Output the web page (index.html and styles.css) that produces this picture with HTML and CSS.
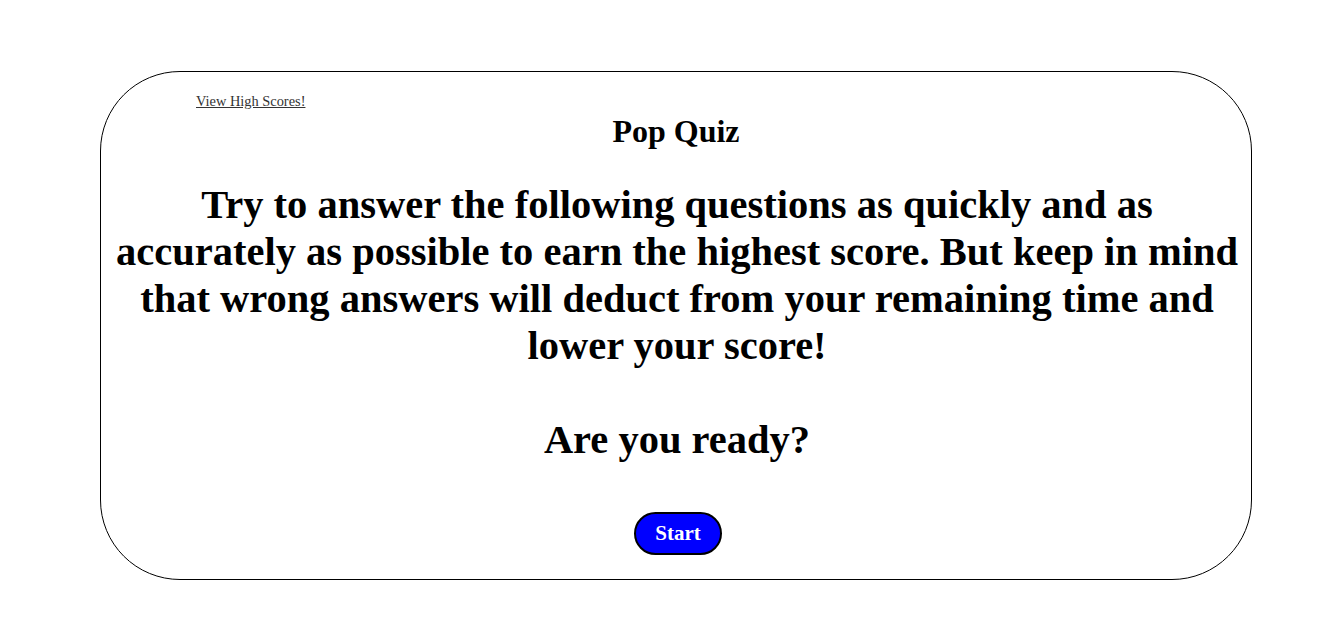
FILE: index.html
```html
<!DOCTYPE html>
<html>
<head>
<meta charset="utf-8">
<link rel="stylesheet" href="styles.css">
</head>
<body>
<div class="card">
  <div class="top">
    <a class="scores" href="#">View High Scores!</a>
  </div>
  <h1 class="title">Pop Quiz</h1>
  <p class="intro">Try to answer the following questions as quickly and as accurately as possible to earn the highest score. But keep in mind that wrong answers will deduct from your remaining time and lower your score!<br><br>Are you ready?</p>
  <div class="actions"><button class="start">Start</button></div>
</div>
</body>
</html>
```

FILE: styles.css
```css
body {
  margin: 8px;
  font-family: "Liberation Serif", "Times New Roman", serif;
  background: #fff;
  color: #000;
}
.card {
  box-sizing: border-box;
  width: 1152px;
  height: 509px;
  margin: 63px 0 0 92px;
  border: 1px solid #000;
  border-radius: 80px;
  text-align: center;
}
.top {
  text-align: left;
  padding: 20px 0 0 95px;
  height: 17px;
  line-height: 17px;
}
.scores {
  font-size: 14.4px;
  color: #333;
}
.title {
  font-size: 32px;
  margin: 4px 0 0;
  line-height: 37px;
}
.intro {
  font-size: 40.5px;
  font-weight: bold;
  margin: 31px 12px 0 14px;
  line-height: 47px;
}
.actions {
  margin-top: 49px;
  padding-left: 4px;
}
.start {
  font-family: "Liberation Serif", "Times New Roman", serif;
  font-size: 21px;
  font-weight: bold;
  color: #fff;
  background: #0000ff;
  border: 2px solid #000;
  border-radius: 22px;
  width: 88px;
  height: 43px;
  padding: 0;
}
```
